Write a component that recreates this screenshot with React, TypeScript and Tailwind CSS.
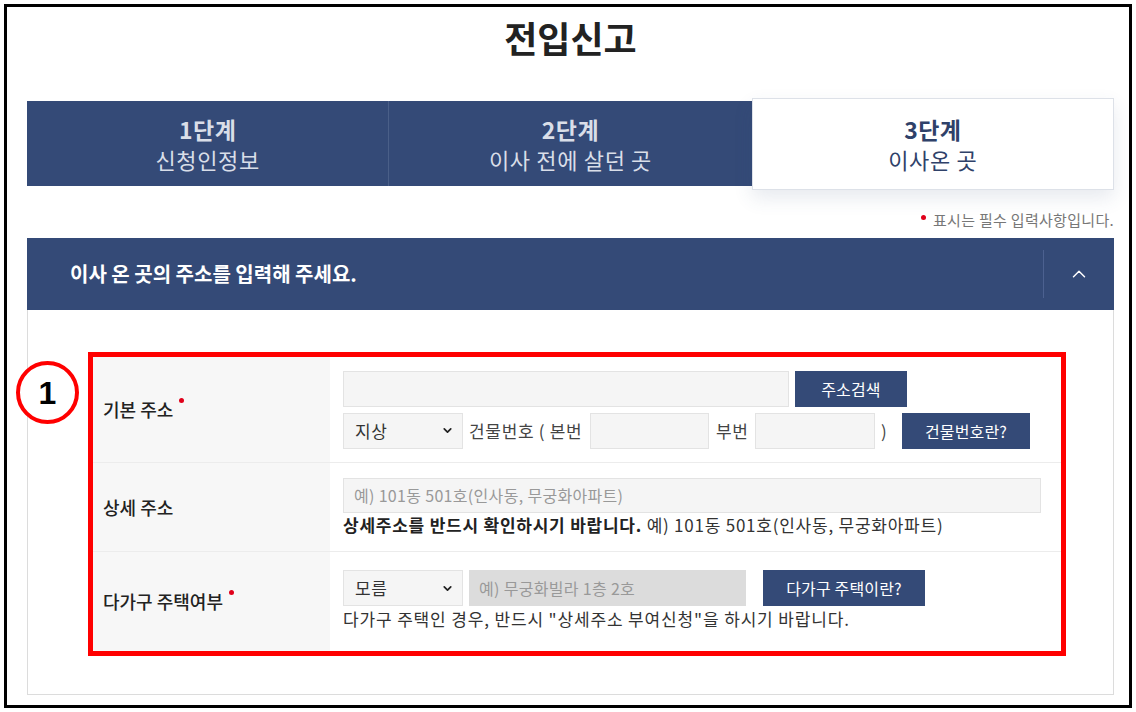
import { ChevronDown, ChevronUp } from "lucide-react";

const NAVY = "bg-[#344a77]";

function Dot() {
  return (
    <span className="relative -top-[9px] ml-[6px] inline-block h-[5px] w-[5px] rounded-full bg-[#e0001a]" />
  );
}

function Select({ value }: { value: string }) {
  return (
    <div className="flex h-[36px] w-[120px] items-center justify-between border border-[#e3e3e3] bg-[#f5f5f5] pl-[11px] pr-[8px] text-[17px] tracking-[0.04em] text-[#333]">
      <span>{value}</span>
      <ChevronDown size={13} strokeWidth={3.2} className="text-[#222]" />
    </div>
  );
}

function NavyButton({ label, width }: { label: string; width: string }) {
  return (
    <button
      className={`flex h-[36px] ${width} items-center justify-center ${NAVY} text-[16px] tracking-[0.01em] text-white`}
    >
      {label}
    </button>
  );
}

function Row({
  label,
  required,
  children,
  className,
}: {
  label: string;
  required?: boolean;
  children: React.ReactNode;
  className: string;
}) {
  return (
    <div className={`flex border-b border-[#ececec] last:border-b-0 ${className}`}>
      <div className="flex w-[237px] shrink-0 items-center bg-[#f7f7f7] pl-[10px] text-[18px] font-medium text-[#222]">
        {label}
        {required && <Dot />}
      </div>
      <div className="flex flex-1 flex-col justify-center pl-[13px]">{children}</div>
    </div>
  );
}

export default function App() {
  return (
    <div className="h-[712px] w-[1136px] bg-white p-[4px] font-['Noto_Sans_CJK_KR',sans-serif]">
      <div className="h-full border-[3px] border-black pl-[20px] pr-[15px]">
        {/* Title */}
        <div className="h-[94px] pt-[3px] text-center text-[36px] font-bold leading-[54px] text-[#222]">
          전입신고
        </div>

        {/* Steps */}
        <div className={`flex h-[85px] items-center ${NAVY}`}>
          <div className="flex h-full w-1/3 flex-col items-center justify-center border-r border-[#4a5f88] text-[#d9dee8]">
            <div className="text-[23px] font-bold leading-[30px] tracking-[0.02em]">1단계</div>
            <div className="text-[22px] leading-[30px] tracking-[0.03em]">신청인정보</div>
          </div>
          <div className="flex h-full w-1/3 flex-col items-center justify-center text-[#d9dee8]">
            <div className="text-[23px] font-bold leading-[30px] tracking-[0.02em]">2단계</div>
            <div className="text-[22px] leading-[30px] tracking-[0.03em]">이사 전에 살던 곳</div>
          </div>
          <div className="flex h-[92px] w-1/3 flex-col items-center justify-center border border-[#dde1e8] bg-white text-[#2f4169] shadow-[0_8px_18px_rgba(60,80,120,0.12)]">
            <div className="text-[23px] font-bold leading-[30px] tracking-[0.02em]">3단계</div>
            <div className="text-[22px] leading-[30px] tracking-[0.03em]">이사온 곳</div>
          </div>
        </div>

        {/* Required note */}
        <div className="flex h-[52px] items-end justify-end pb-[8px] text-[15px] leading-[20px] tracking-[0.02em] text-[#777]">
          <span className="relative -top-[10px] mr-[7px] inline-block h-[5px] w-[5px] rounded-full bg-[#e0001a]" />
          표시는 필수 입력사항입니다.
        </div>

        {/* Section header */}
        <div className={`flex h-[72px] items-center ${NAVY}`}>
          <div className="flex-1 pl-[43px] text-[20px] font-bold text-white">
            이사 온 곳의 주소를 입력해 주세요.
          </div>
          <div className="flex w-[71px] items-center">
            <span className="h-[48px] w-px bg-[#4c6190]" />
            <div className="flex flex-1 items-center justify-center">
              <ChevronUp size={22} strokeWidth={1.6} className="text-white" />
            </div>
          </div>
        </div>

        {/* Section body */}
        <div className="relative h-[385px] border border-t-0 border-[#dcdcdc] pl-[60px] pr-[47px] pt-[42px]">
          <div className="absolute -left-[12px] top-[51px] flex h-[63px] w-[63px] items-center justify-center rounded-full border-[4px] border-[#ff0000] bg-white font-['Liberation_Sans',sans-serif] text-[32px] font-bold text-black">
            1
          </div>

          <div className="border-[5px] border-[#ff0000]">
            <Row label="기본 주소" required className="h-[106px]">
              <div className="flex items-center gap-[6px]">
                <div className="h-[36px] w-[446px] border border-[#e3e3e3] bg-[#f5f5f5]" />
                <NavyButton label="주소검색" width="w-[112px]" />
              </div>
              <div className="mt-[6px] flex items-center text-[17px] tracking-[0.04em] text-[#444]">
                <Select value="지상" />
                <span className="w-[127px] whitespace-nowrap pl-[6px]">건물번호 ( 본번</span>
                <div className="h-[36px] w-[119px] border border-[#e3e3e3] bg-[#f5f5f5]" />
                <span className="w-[46px] pl-[7px]">부번</span>
                <div className="h-[36px] w-[120px] border border-[#e3e3e3] bg-[#f5f5f5]" />
                <span className="w-[27px] pl-[6px]">)</span>
                <NavyButton label="건물번호란?" width="w-[128px]" />
              </div>
            </Row>

            <Row label="상세 주소" className="h-[89px]">
              <div className="flex h-[35px] w-[698px] items-center border border-[#e3e3e3] bg-[#f5f5f5] pl-[10px] text-[16px] tracking-[0.02em] text-[#999]">
                예) 101동 501호(인사동, 무궁화아파트)
              </div>
              <div className="text-[17px] leading-[24px] tracking-[0.045em] text-[#333]">
                <span className="font-bold text-[#222]">상세주소를 반드시 확인하시기 바랍니다.</span>{" "}
                예) 101동 501호(인사동, 무궁화아파트)
              </div>
            </Row>

            <Row label="다가구 주택여부" required className="h-[99px]">
              <div className="flex items-center">
                <Select value="모름" />
                <div className="ml-[6px] flex h-[36px] w-[277px] items-center bg-[#dcdcdc] pl-[10px] text-[16px] tracking-[0.02em] text-[#999]">
                  예) 무궁화빌라 1층 2호
                </div>
                <div className="ml-[17px]">
                  <NavyButton label="다가구 주택이란?" width="w-[162px]" />
                </div>
              </div>
              <div className="mb-[2px] mt-[1px] text-[17px] leading-[24px] tracking-[0.05em] text-[#333]">
                다가구 주택인 경우, 반드시 "상세주소 부여신청"을 하시기 바랍니다.
              </div>
            </Row>
          </div>
        </div>
      </div>
    </div>
  );
}
